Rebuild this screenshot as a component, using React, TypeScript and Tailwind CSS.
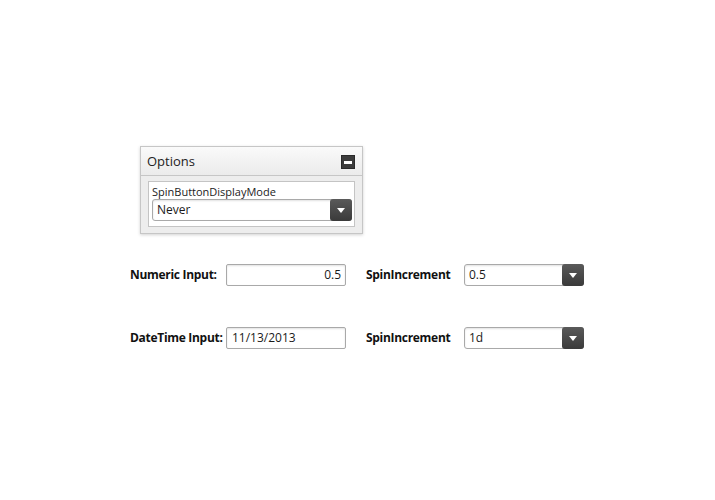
import { ReactNode } from "react";

const font = { fontFamily: '"Open Sans", "Noto Sans", sans-serif' };

const Caret = () => (
  <svg width="8" height="5" viewBox="0 0 8 5">
    <path d="M0 0 L8 0 L4 5 Z" fill="#ffffff" />
  </svg>
);

const DropDown = ({ value, width }: { value: string; width: string }) => (
  <div
    className={`${width} h-[22px] flex items-center bg-white border border-[#a9a9a9] rounded-[3px] shadow-[inset_0_1px_2px_rgba(0,0,0,0.12)]`}
  >
    <span className="flex-1 pl-[4px] text-[12px] text-[#1a1a1a] leading-none">{value}</span>
    <div className="w-[22px] h-[22px] -mr-px -my-px rounded-[3px] bg-gradient-to-b from-[#5a5a5a] to-[#3a3a3a] flex items-center justify-center">
      <Caret />
    </div>
  </div>
);

const Row = ({ label, children, value }: { label: string; children: ReactNode; value: string }) => (
  <div className="flex items-center h-[22px]">
    <div className="w-[96px] whitespace-nowrap tracking-[-0.3px] text-[12px] font-bold text-[#111]">{label}</div>
    {children}
    <div className="w-[98px] ml-[20px] whitespace-nowrap tracking-[-0.3px] text-[12px] font-bold text-[#111]">
      SpinIncrement
    </div>
    <DropDown value={value} width="w-[120px]" />
  </div>
);

export default function App() {
  return (
    <div className="w-[715px] h-[500px] bg-white" style={font}>
      <div className="pt-[146px] pl-[140px]">
        <div className="w-[223px] border border-[#c6c6c6] shadow-[0_1px_3px_rgba(0,0,0,0.18)] bg-[#ededed]">
          <div className="h-[29px] flex items-center justify-between px-[6px] bg-gradient-to-b from-[#fafafa] to-[#ebebeb] border-b border-[#c6c6c6]">
            <span className="text-[13px] text-[#222] pt-[2px]">Options</span>
            <div className="w-[14px] h-[14px] bg-[#3c3c3c] border border-[#2a2a2a] flex items-center justify-center mr-[1px] mt-[2px]">
              <div className="w-[8px] h-[3px] bg-white" />
            </div>
          </div>
          <div className="px-[7px] pt-[5px] pb-[6px]">
            <div className="bg-white border border-[#c4c4c4] px-[3px] pt-[2px] pb-[5px]">
              <div className="text-[11px] text-[#222] leading-[15px]">SpinButtonDisplayMode</div>
              <DropDown value="Never" width="w-[200px]" />
            </div>
          </div>
        </div>
      </div>
      <div className="pl-[130px] pt-[30px] flex flex-col gap-[41px]">
        <Row label="Numeric Input:" value="0.5">
          <div className="w-[120px] h-[22px] border border-[#a9a9a9] rounded-[2px] bg-white shadow-[inset_0_1px_2px_rgba(0,0,0,0.12)] flex items-center justify-end pr-[4px] text-[12px] text-[#1a1a1a]">
            0.5
          </div>
        </Row>
        <Row label="DateTime Input:" value="1d">
          <div className="w-[120px] h-[22px] border border-[#a9a9a9] rounded-[2px] bg-white shadow-[inset_0_1px_2px_rgba(0,0,0,0.12)] flex items-center pl-[5px] text-[12px] text-[#1a1a1a]">
            11/13/2013
          </div>
        </Row>
      </div>
    </div>
  );
}
